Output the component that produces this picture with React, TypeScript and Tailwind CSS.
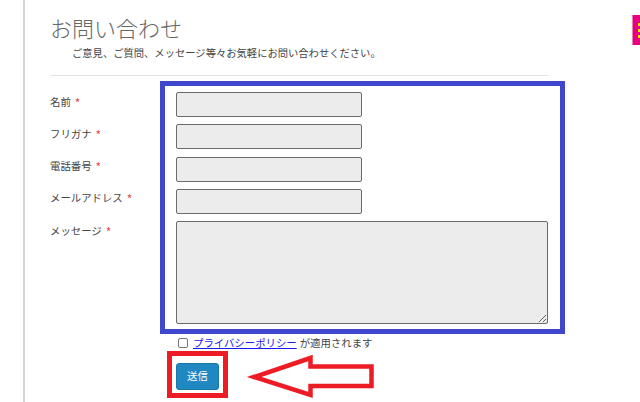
import React from 'react';

const FONT = { fontFamily: '"Noto Sans CJK JP", "Noto Sans", sans-serif' };

const fields = ['名前', 'フリガナ', '電話番号', 'メールアドレス'];

const Label: React.FC<{ text: string }> = ({ text }) => (
  <div className="w-[126px] shrink-0 pt-[1.5px] text-[10.4px] leading-[14px] text-[#444]">
    {text}
    <span className="ml-[4px] inline-block translate-y-[2px] text-[12px] leading-[14px] text-[#e5484d]">*</span>
  </div>
);

export default function App() {
  return (
    <div className="relative flex w-[640px] h-[402px] overflow-hidden bg-white" style={FONT}>
      {/* サイドの線 */}
      <div className="w-[23px] shrink-0" />
      <div className="w-[2px] shrink-0 bg-[#d4d4d4]" />

      <div className="flex flex-col pl-[25px]">
        <h1 className="mt-[13px] text-[22px] leading-[28px] font-light text-[#666]">お問い合わせ</h1>
        <p className="mt-[5px] ml-[22px] text-[10.3px] leading-[14px] text-[#444]">
          ご意見、ご質問、メッセージ等々お気軽にお問い合わせください。
        </p>
        <div className="mt-[15px] h-px w-[498px] bg-[#e3e3e3]" />

        <div className="mt-[16px] flex flex-col gap-[7.3px]">
          {fields.map((f) => (
            <div key={f} className="flex">
              <Label text={f} />
              <input className="w-[186px] h-[25px] rounded-[2px] border border-[#6b6b6b] bg-[#ececec]" />
            </div>
          ))}
          <div className="flex">
            <Label text="メッセージ" />
            <textarea className="w-[372px] h-[103px] rounded-[2px] border border-[#6b6b6b] bg-[#ececec]" />
          </div>
        </div>

        <div className="mt-[12px] ml-[128px] flex items-center h-[14px] text-[10.4px] leading-[14px]">
          <span className="w-[10px] h-[10px] rounded-[2px] border border-[#777] bg-white" />
          <a className="ml-[5px] text-[#1a1aee] underline">プライバシーポリシー</a>
          <span className="ml-[3px] text-[#444]">が適用されます</span>
        </div>

        <div className="mt-[11px] ml-[126px]">
          <button className="w-[43px] h-[27px] rounded-[3px] border border-[#1876a8] bg-[#1f88c1] text-[10.4px] text-white">
            送信
          </button>
        </div>
      </div>

      {/* 右上のタブ */}
      <div className="absolute right-0 top-[15px] w-[8px] h-[30px] bg-[#e4007f] border-l border-[#f07ab8] flex flex-col items-end justify-center gap-[3px]">
        <span className="w-[2px] h-[3px] bg-[#ffe600]" />
        <span className="w-[2px] h-[3px] bg-[#ffe600]" />
        <span className="w-[2px] h-[3px] bg-[#ffe600]" />
      </div>

      {/* 注釈 */}
      <div className="absolute left-[160px] top-[81px] w-[405px] h-[253px] border-[5px] border-[#3f48cc]" />
      <div className="absolute left-[167px] top-[351px] w-[61px] h-[47px] border-[5px] border-[#ed1c24]" />
      <svg className="absolute left-0 top-0" width="640" height="402" viewBox="0 0 640 402">
        <polygon
          points="254,377 310.5,358 310.5,366.5 371.5,366.5 371.5,386 310.5,386 310.5,395"
          fill="none"
          stroke="#ed1c24"
          strokeWidth="4.5"
          strokeLinejoin="miter"
        />
      </svg>
    </div>
  );
}
